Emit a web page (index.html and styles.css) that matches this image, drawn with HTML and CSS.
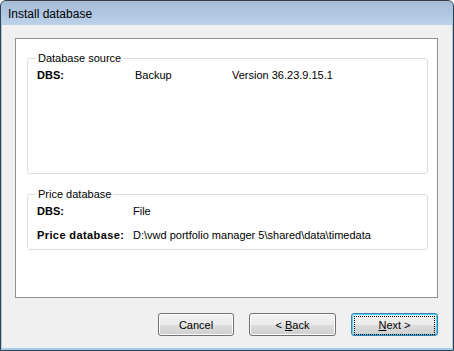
FILE: index.html
```html
<!DOCTYPE html>
<html lang="en">
<head>
  <meta charset="UTF-8" />
  <title>Install database</title>
  <link rel="stylesheet" href="styles.css">
</head>
<body>
  <div class="window">
    <div class="titlebar">Install database</div>
    <div class="client">
      <div class="panel">
        <fieldset class="group group-source">
          <legend>Database source</legend>
          <div class="rows three">
            <span class="label">DBS:</span>
            <span>Backup</span>
            <span>Version 36.23.9.15.1</span>
          </div>
        </fieldset>
        <fieldset class="group group-price">
          <legend>Price database</legend>
          <div class="rows two">
            <span class="label">DBS:</span>
            <span>File</span>
            <span class="label wide">Price database:</span>
            <span>D:\vwd portfolio manager 5\shared\data\timedata</span>
          </div>
        </fieldset>
      </div>
      <div class="buttons">
        <button type="button" class="btn btn-cancel">Cancel</button>
        <button type="button" class="btn">&lt; <u>B</u>ack</button>
        <button type="button" class="btn btn-default"><span class="focus"><u>N</u>ext &gt;</span></button>
      </div>
    </div>
  </div>
</body>
</html>
```

FILE: styles.css
```css
body {
  margin: 0;
  font-family: "Liberation Sans", Arial, sans-serif;
  font-size: 11px;
  color: #000;
}

.window {
  width: 454px;
  height: 351px;
  box-sizing: border-box;
  border: 1px solid #3b3f45;
  border-radius: 6px 6px 0 0;
  background: #9fcdee;
  padding: 0 1px 2px 1px;
  display: flex;
  flex-direction: column;
  overflow: hidden;
}

.titlebar {
  height: 24px;
  line-height: 26px;
  padding-left: 6px;
  font-size: 12px;
  background: linear-gradient(to bottom, #a6bcd8, #b2c8e2 60%, #bdd2ea);
  border-radius: 5px 5px 0 0;
}

.client {
  flex: 1;
  background: #f0f0f0;
  padding: 13px 14px 0 13px;
  display: flex;
  flex-direction: column;
}

.panel {
  height: 260px;
  box-sizing: border-box;
  background: #fff;
  border: 1px solid #8e8f8f;
  padding: 13px 9px 0 11px;
}

.group {
  margin: 0;
  padding: 0 0 0 9px;
  border: 1px solid #d5dfe5;
  border-radius: 3px;
}

.group legend {
  padding: 0 2px;
  margin-left: -1px;
  line-height: 12px;
}

.group-source {
  height: 122px;
  box-sizing: border-box;
}

.group-price {
  margin-top: 14px;
  height: 62px;
  box-sizing: border-box;
}

.rows {
  display: grid;
  row-gap: 11px;
  line-height: 13px;
  padding-top: 5px;
}

.rows.three {
  grid-template-columns: 98px 97px auto;
}

.rows.two {
  grid-template-columns: 96px auto;
}

.label {
  font-weight: bold;
}

.label.wide {
  letter-spacing: 0.4px;
}

.buttons {
  display: flex;
  justify-content: flex-end;
  gap: 15px;
  margin-top: 15px;
}

.btn {
  width: 87px;
  height: 23px;
  padding: 0;
  font-family: inherit;
  font-size: 11px;
  color: #000;
  border: 1px solid #707070;
  border-radius: 3px;
  background: linear-gradient(to bottom, #f2f2f2, #ebebeb 50%, #dddddd 51%, #cfcfcf);
  box-shadow: inset 0 0 0 1px #fcfcfc;
}

.btn-cancel {
  width: 76px;
}

.btn-default {
  border-color: #3c7fb1;
  box-shadow: inset 0 0 0 1px #48d6f9;
}

.btn-default .focus {
  display: block;
  margin: 2px;
  height: 17px;
  line-height: 17px;
  border: 1px dotted #000;
}
```
